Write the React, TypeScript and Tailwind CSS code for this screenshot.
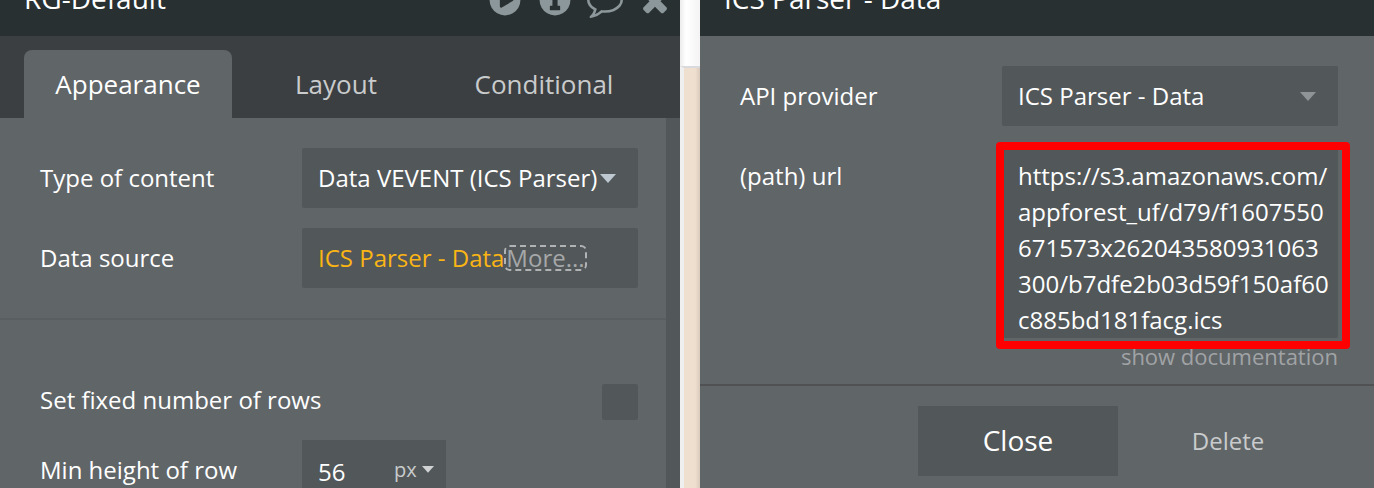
import type { ReactNode } from "react";

const icons = {
  play: "M896 128q209 0 385.500 103t279.500 279.500 103 385.500-103 385.500-279.500 279.500-385.500 103-385.500-103-279.500-279.500-103-385.500 103-385.500 279.500-279.500 385.500-103zm384 823q32-18 32-55t-32-55l-544-320q-31-19-64-1-32 19-32 55v640q0 36 32 55 16 8 32 8 17 0 32-9z",
  info: "M1152 1376v-160q0-14-9-23t-23-9h-96v-512q0-14-9-23t-23-9h-320q-14 0-23 9t-9 23v160q0 14 9 23t23 9h96v320h-96q-14 0-23 9t-9 23v160q0 14 9 23t23 9h448q14 0 23-9t9-23zm-128-896v-160q0-14-9-23t-23-9h-192q-14 0-23 9t-9 23v160q0 14 9 23t23 9h192q14 0 23-9t9-23zm640 416q0 209-103 385.500t-279.500 279.500-385.500 103-385.500-103-279.500-279.500-103-385.500 103-385.500 279.500-279.500 385.500-103 385.500 103 279.500 279.500 103 385.500z",
  comment:
    "M896 384q-204 0-381.500 69.500t-282 187.500-104.500 255q0 112 71.500 213.500t201.500 175.500l87 50-27 96q-24 91-70 172 152-63 275-171l43-38 57 6q69 8 130 8 204 0 381.500-69.500t282-187.500 104.500-255-104.500-255-282-187.500-381.500-69.500zm896 512q0 174-120 321.500t-326 233-450 85.500q-70 0-145-8-198 175-460 242-49 14-114 22h-5q-15 0-27-10.500t-16-27.500v-1q-3-4-.5-12t2-10 4.500-9.500l6-9 7-8.500 8-9q7-8 31-34.500t34.500-38 31-39.500 32.500-51 27-59 26-76q-157-89-247.500-220t-90.500-281q0-174 120-321.500t326-233 450-85.500 450 85.500 326 233 120 321.500z",
  close:
    "M1490 1322q0 40-28 68l-136 136q-28 28-68 28t-68-28l-294-294-294 294q-28 28-68 28t-68-28l-136-136q-28-28-28-68t28-68l294-294-294-294q-28-28-28-68t28-68l136-136q28-28 68-28t68 28l294 294 294-294q28-28 68-28t68 28l136 136q28 28 28 68t-28 68l-294 294 294 294q28 28 28 68z",
};

const HeaderButton = ({ label, path }: { label: string; path: string }) => (
  <button type="button" aria-label={label} className="text-[#8c979b]">
    <svg viewBox="0 0 1792 1792" className="block size-9 fill-current">
      <path d={path} />
    </svg>
  </button>
);

const PanelHeader = ({ title, children }: { title: string; children?: ReactNode }) => (
  <header className="flex h-9 shrink-0 items-end justify-between bg-[#293031] pr-[7px] pb-[18px] pl-6">
    <h2 className="text-[28px] leading-10 whitespace-nowrap">{title}</h2>
    <div className="flex gap-[14px]">{children}</div>
  </header>
);

const Caret = ({ className }: { className: string }) => (
  <svg viewBox="0 0 16 9" className={`pointer-events-none absolute ${className}`}>
    <path d="M0 0h16L8 9z" fill="currentColor" />
  </svg>
);

const Dropdown = ({ id, value, caret }: { id: string; value: string; caret: string }) => (
  <div className="relative">
    <select id={id} className="block h-[60px] w-full appearance-none rounded-xs bg-[#525759] pl-4">
      <option>{value}</option>
    </select>
    <Caret className={`top-[26px] right-[22px] w-4 ${caret}`} />
  </div>
);

const row = "grid grid-cols-[1fr_336px]";

const ElementPanel = () => (
  <section className="flex min-w-0 flex-[680] flex-col">
    <PanelHeader title="RG-Default">
      <HeaderButton label="Preview" path={icons.play} />
      <HeaderButton label="Info" path={icons.info} />
      <HeaderButton label="Comment" path={icons.comment} />
      <HeaderButton label="Close" path={icons.close} />
    </PanelHeader>
    <nav className="flex h-[82px] shrink-0 items-end bg-[#3b3f41] pl-6 text-[26px] text-[#c9cbcc]">
      <button type="button" className="h-[68px] w-52 rounded-t-lg bg-[#606568] text-white">
        Appearance
      </button>
      <button type="button" className="h-[68px] w-52">
        Layout
      </button>
      <button type="button" className="h-[68px] w-52">
        Conditional
      </button>
    </nav>
    <div className="flex flex-1">
      <div className="flex-1">
        <div className="flex flex-col gap-5 border-b-2 border-[#595e61] py-[30px] pr-7 pl-10">
          <div className={`${row} items-center`}>
            <label htmlFor="content-type">Type of content</label>
            <Dropdown id="content-type" value="Data VEVENT (ICS Parser)" caret="text-[#bdc8d0]" />
          </div>
          <div className={`${row} items-center`}>
            <label htmlFor="data-source">Data source</label>
            <button
              type="button"
              id="data-source"
              className="flex h-[60px] items-center rounded-xs bg-[#525759] pl-4 text-[#fab515]"
            >
              ICS Parser - Data
              <span className="rounded-md border-2 border-dashed border-[#b0b2b3] leading-[22px] text-[#a5a7a8]">
                More...
              </span>
            </button>
          </div>
        </div>
        <div className="flex flex-col gap-5 pt-16 pr-7 pl-10">
          <div className="flex items-start justify-between">
            <label htmlFor="fixed-rows">Set fixed number of rows</label>
            <input id="fixed-rows" type="checkbox" className="size-9 appearance-none rounded-xs bg-[#525759]" />
          </div>
          <div className={`${row} items-center`}>
            <label htmlFor="min-height">Min height of row</label>
            <div className="flex h-[60px] w-36 items-center bg-[#525759] pl-4">
              <input id="min-height" defaultValue="56" className="w-[76px] pt-1" />
              <div className="relative flex-1">
                <select aria-label="Unit" className="block w-full appearance-none text-xl text-[#c9cbcc]">
                  <option>px</option>
                </select>
                <Caret className="top-[10px] right-3 w-3 text-[#d0d2d3]" />
              </div>
            </div>
          </div>
        </div>
      </div>
      <div className="w-[14px] bg-[#525759]" />
    </div>
  </section>
);

const ApiPanel = () => (
  <section className="flex min-w-0 flex-[674] flex-col">
    <PanelHeader title="ICS Parser - Data" />
    <div className="border-b-2 border-[#4f5152] pt-[30px] pr-9 pb-[14px] pl-10">
      <div className={`${row} items-center`}>
        <label htmlFor="provider">API provider</label>
        <Dropdown id="provider" value="ICS Parser - Data" caret="text-[#8f9496]" />
      </div>
      <div className={`${row} mt-5`}>
        <label htmlFor="path-url" className="pt-3 leading-9">
          (path) url
        </label>
        <div className="relative">
          <textarea
            id="path-url"
            rows={5}
            spellCheck={false}
            className="block w-full resize-none overflow-hidden rounded-xs bg-[#525759] pt-3 pr-[6px] pl-4 leading-9 break-all"
            defaultValue="https://s3.amazonaws.com/appforest_uf/d79/f1607550671573x262043580931063300/b7dfe2b03d59f150af60c885bd181facg.ics"
          />
          <div className="pointer-events-none absolute -top-1 -right-3 -bottom-[11px] -left-[6px] rounded border-8 border-[#ff0000]" />
        </div>
      </div>
      <div className="pt-1 text-right text-[22px] leading-7 text-[#a0a3a5]">
        <a href="#docs">show documentation</a>
      </div>
    </div>
    <footer className="flex justify-end gap-[10px] pt-5 pr-[46px]">
      <button type="button" className="h-[70px] w-[200px] bg-[#525759] text-[28px]">
        Close
      </button>
      <button type="button" className="h-[70px] w-[200px] text-[#c9cbcc]">
        Delete
      </button>
    </footer>
  </section>
);

const App = () => {
  return (
    <main className="flex h-screen overflow-hidden bg-[#606568] font-['Open_Sans',sans-serif] text-2xl text-white">
      <ElementPanel />
      <div className="flex w-5 shrink-0 flex-col bg-white">
        <div className="h-[66px] bg-linear-to-r from-[#ececec] via-white via-30% to-[#f4f4f4]" />
        <div className="flex-1 border-t-2 border-l-4 border-t-[#d9d9de] border-l-[#efefef] bg-linear-to-r from-[#efdfcf] from-70% to-[#d9cabc]" />
      </div>
      <ApiPanel />
    </main>
  );
};

export default App;
